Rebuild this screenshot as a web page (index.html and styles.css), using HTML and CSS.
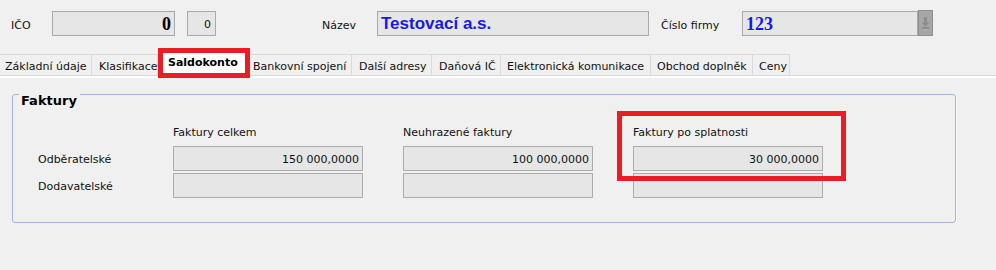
FILE: index.html
```html
<!DOCTYPE html>
<html lang="cs">
<head>
  <meta charset="UTF-8">
  <title>Firma - Saldokonto</title>
  <link rel="stylesheet" href="styles.css">
</head>
<body>
  <div class="header">
    <span class="lbl lbl-ico">IČO</span>
    <div class="field field-ico">0</div>
    <div class="field field-small">0</div>
    <span class="lbl lbl-nazev">Název</span>
    <div class="field field-nazev">Testovací a.s.</div>
    <span class="lbl lbl-cislo">Číslo firmy</span>
    <div class="field field-cislo">123</div>
    <div class="drop-btn">
      <svg width="13" height="24" viewBox="0 0 13 24">
        <rect x="5" y="6" width="3" height="6" fill="#8c8c8c"/>
        <polygon points="2.5,11.5 10.5,11.5 6.5,15.5" fill="#8c8c8c"/>
        <rect x="3" y="16" width="7" height="2" fill="#8c8c8c"/>
        <rect x="3" y="18" width="7" height="1" fill="#b4b4b4"/>
      </svg>
    </div>
  </div>

  <div class="tabs">
    <div class="tab tab-zakladni">Základní údaje</div>
    <div class="tab tab-klasifikace">Klasifikace</div>
    <div class="tab tab-active">Saldokonto</div>
    <div class="tab tab-bankovni">Bankovní spojení</div>
    <div class="tab tab-adresy">Další adresy</div>
    <div class="tab tab-dic">Daňová IČ</div>
    <div class="tab tab-komunikace">Elektronická komunikace</div>
    <div class="tab tab-obchod">Obchod doplněk</div>
    <div class="tab tab-ceny">Ceny</div>
  </div>

  <div class="tab-page">
    <div class="group">
      <div class="group-title">Faktury</div>

      <div class="grid">
        <div></div>
        <div class="col-head">Faktury celkem</div>
        <div class="col-head">Neuhrazené faktury</div>
        <div class="col-head">Faktury po splatnosti</div>

        <div class="row-lbl">Odběratelské</div>
        <div class="box">150 000,0000</div>
        <div class="box">100 000,0000</div>
        <div class="box">30 000,0000</div>

        <div class="row-lbl">Dodavatelské</div>
        <div class="box"></div>
        <div class="box"></div>
        <div class="box"></div>
      </div>

      <!-- red highlight around the third column -->
      <div class="highlight"></div>
    </div>
  </div>
</body>
</html>
```

FILE: styles.css
```css
html, body {
  margin: 0;
  padding: 0;
  background-color: #f0f0f0;
  font-family: "DejaVu Sans", sans-serif;
  font-size: 11px;
  color: #111;
}

/* top row */

.header {
  display: flex;
  align-items: flex-start;
  padding: 11px 0 0 11px;
  height: 25px;
}

.lbl {
  padding-top: 2px;
  line-height: 25px;
}

.lbl-ico {
  width: 41px;
}

.lbl-nazev {
  width: 55px;
  margin-left: 106px;
}

.lbl-cislo {
  width: 81px;
  margin-left: 12px;
}

.field {
  box-sizing: border-box;
  height: 25px;
  background-color: #e6e6e6;
  border: 1px solid #a9a9a9;
  white-space: nowrap;
  overflow: hidden;
}

.field-ico {
  width: 123px;
  padding: 2px 3px 0 0;
  text-align: right;
  font-family: "Liberation Serif", serif;
  font-weight: bold;
  font-size: 18px;
  line-height: 21px;
  color: #000;
}

.field-small {
  width: 29px;
  margin-left: 12px;
  padding: 2px 4px 0 0;
  text-align: right;
  line-height: 21px;
}

.field-nazev {
  width: 272px;
  padding: 1px 0 0 3px;
  font-family: "Liberation Sans", sans-serif;
  font-weight: bold;
  font-size: 17px;
  line-height: 22px;
  color: #1717ea;
}

.field-cislo {
  width: 176px;
  padding: 2px 0 0 3px;
  font-family: "Liberation Serif", serif;
  font-weight: bold;
  font-size: 18px;
  line-height: 21px;
  color: #1717ea;
}

.drop-btn {
  box-sizing: border-box;
  width: 15px;
  height: 26px;
  margin-top: -1px;
  background-color: #a6a6a6;
  border: 1px solid #8e8e8e;
}

.drop-btn svg {
  display: block;
}

/* tabs */

.tabs {
  display: flex;
  align-items: flex-start;
  box-sizing: border-box;
  height: 22px;
  margin-top: 18px;
  border-bottom: 1px solid #d9d9d9;
}

.tab {
  box-sizing: border-box;
  height: 21px;
  padding: 3px 0 0 6px;
  line-height: 17px;
  border-top: 1px solid #d9d9d9;
  border-right: 1px solid #d9d9d9;
  white-space: nowrap;
}

.tab-zakladni { width: 92px; padding-left: 5px; }
.tab-klasifikace { width: 66px; padding-left: 7px; }
.tab-bankovni { width: 102px; padding-left: 3px; }
.tab-adresy { width: 80px; padding-left: 7px; }
.tab-dic { width: 69px; padding-left: 7px; }
.tab-komunikace { width: 150px; }
.tab-obchod { width: 102px; }
.tab-ceny { width: 37px; }

.tab-active {
  position: relative;
  z-index: 1;
  width: 92px;
  height: 30px;
  margin-top: -6px;
  padding: 0 0 0 5px;
  line-height: 20px;
  font-weight: bold;
  color: #000;
  background-color: #fff;
  border: 5px solid #ec1c24;
}

.tab-page {
  border-top: 2px solid #fff;
  padding: 16px 0 0 12px;
}

/* group box */

.group {
  position: relative;
  box-sizing: border-box;
  width: 944px;
  padding: 0 0 24px 25px;
  border: 1px solid #9db7d4;
  border-radius: 3px;
  box-shadow: 1px 1px 0 #fff;
}

.group-title {
  display: inline-block;
  margin: -7px 0 0 -19px;
  padding: 0 3px 0 2px;
  line-height: 15px;
  font-size: 13px;
  font-weight: bold;
  color: #000;
  background-color: #f0f0f0;
}

.grid {
  display: grid;
  grid-template-columns: 95px 190px 190px 190px;
  column-gap: 40px;
  row-gap: 2px;
  margin-top: 18px;
}

.col-head {
  line-height: 14px;
  margin-bottom: 4px;
}

.row-lbl {
  height: 25px;
  padding-top: 3px;
  line-height: 21px;
  box-sizing: border-box;
}

.box {
  box-sizing: border-box;
  height: 25px;
  padding: 2px 3px 0 0;
  line-height: 21px;
  text-align: right;
  background-color: #e6e6e6;
  border: 1px solid #adadad;
}

.highlight {
  position: absolute;
  left: 604px;
  top: 16px;
  box-sizing: border-box;
  width: 229px;
  height: 70px;
  border: 5px solid #ec1c24;
}
```
